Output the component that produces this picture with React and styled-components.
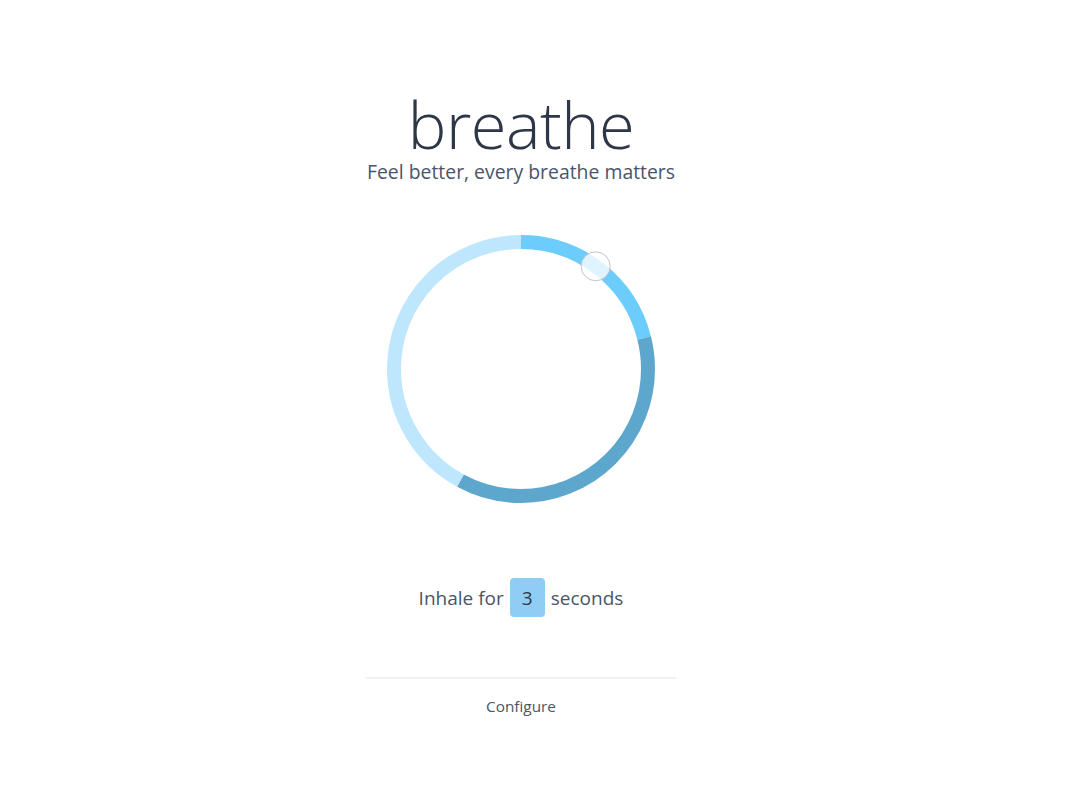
import React from "react";
import styled, { createGlobalStyle } from "styled-components";

const GlobalStyle = createGlobalStyle`
  body {
    margin: 0;
    background: #ffffff;
    font-family: "Open Sans", "Noto Sans", sans-serif;
  }
`;

const Page = styled.div`
  display: flex;
  justify-content: center;
  padding: 91px 25px 0 0;
`;

const Column = styled.div`
  width: 310px;
  display: flex;
  flex-direction: column;
  align-items: center;
`;

const Title = styled.h1`
  margin: 0;
  font-size: 65px;
  font-weight: 300;
  line-height: 66px;
  color: #2d3748;
  letter-spacing: -0.5px;
`;

const Subtitle = styled.p`
  margin: 3px 0 0;
  font-size: 19.4px;
  line-height: 24px;
  color: #4a5568;
  white-space: nowrap;
`;

const Ring = styled.svg`
  display: block;
  margin-top: 50px;
`;

const Status = styled.div`
  margin-top: 74px;
  display: flex;
  align-items: center;
  gap: 6px;
  font-size: 19px;
  color: #4a5568;
`;

const Count = styled.span`
  display: inline-flex;
  align-items: center;
  justify-content: center;
  width: 35px;
  height: 39px;
  border-radius: 4px;
  background: #90cdf4;
  color: #2d3748;
`;

const Divider = styled.hr`
  width: 100%;
  margin: 60px 0 0;
  border: none;
  border-top: 2px solid #edf2f7;
`;

const ConfigureButton = styled.button`
  margin-top: 13px;
  background: none;
  border: none;
  padding: 4px 8px;
  font-family: inherit;
  font-size: 15.3px;
  color: #4a5568;
  cursor: pointer;
`;

const phases = [
  { name: "inhale", seconds: 4, color: "#6ccdfd" },
  { name: "hold", seconds: 7, color: "#5ea7cc" },
  { name: "exhale", seconds: 8, color: "#bee7fd" },
];

function BreathRing({ progress }) {
  const size = 270;
  const c = size / 2;
  const r = 127;
  const circ = 2 * Math.PI * r;
  const total = phases.reduce((s, p) => s + p.seconds, 0);
  let offset = 0;
  const angle = progress * 2 * Math.PI;
  const kx = c + r * Math.sin(angle);
  const ky = c - r * Math.cos(angle);

  return (
    <Ring width={size} height={size} viewBox={`0 0 ${size} ${size}`}>
      <g transform={`rotate(-90 ${c} ${c})`}>
        {phases.map((p) => {
          const len = (p.seconds / total) * circ;
          const el = (
            <circle
              key={p.name}
              cx={c}
              cy={c}
              r={r}
              fill="none"
              stroke={p.color}
              strokeWidth="14"
              strokeDasharray={`${len} ${circ - len}`}
              strokeDashoffset={-offset}
            />
          );
          offset += len;
          return el;
        })}
      </g>
      <circle
        cx={kx}
        cy={ky}
        r="14.5"
        fill="rgba(255,255,255,0.78)"
        stroke="#c4c4c4"
        strokeWidth="1"
      />
    </Ring>
  );
}

export default function App() {
  return (
    <Page>
      <GlobalStyle />
      <Column>
        <Title>breathe</Title>
        <Subtitle>Feel better, every breathe matters</Subtitle>
        <BreathRing progress={0.1} />
        <Status>
          Inhale for <Count>3</Count> seconds
        </Status>
        <Divider />
        <ConfigureButton>Configure</ConfigureButton>
      </Column>
    </Page>
  );
}
